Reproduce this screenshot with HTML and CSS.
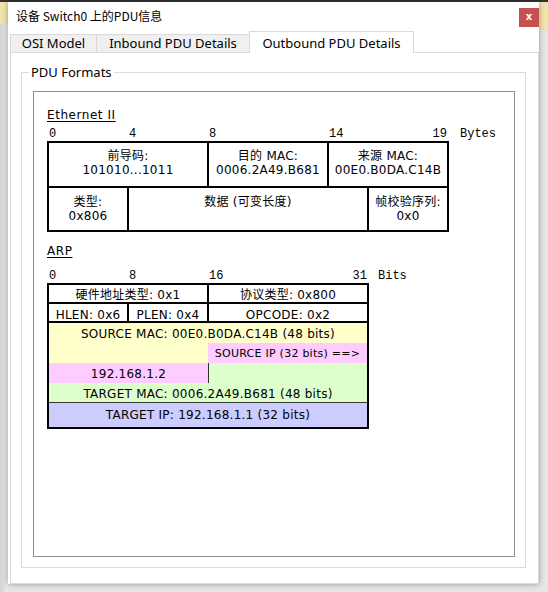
FILE: index.html
```html
<!DOCTYPE html>
<html>
<head>
<meta charset="utf-8">
<link rel="stylesheet" href="styles.css">
</head>
<body>
<div class="dialog">
  <div class="titlebar">
    <span class="title">设备 Switch0 上的PDU信息</span>
    <span class="close">x</span>
  </div>
  <div class="tabs">
    <div class="tab t-osi">OSI Model</div>
    <div class="tab t-in">Inbound PDU Details</div>
    <div class="tab t-out active">Outbound PDU Details</div>
  </div>
  <div class="pane">
    <fieldset class="group">
      <legend>PDU Formats</legend>
      <div class="panel">
        <div class="proto">Ethernet II</div>
        <div class="scale-row">
          <div class="scale eth-cols">
            <span class="s-0">0</span>
            <span class="s-4">4</span>
            <span class="s-8">8</span>
            <span class="s-14">14</span>
            <span class="s-19">19</span>
          </div>
          <span class="unit">Bytes</span>
        </div>
        <div class="eth eth-cols">
          <div class="cell e-pre">前导码:<br>101010...1011</div>
          <div class="cell e-dst">目的 MAC:<br>0006.2A49.B681</div>
          <div class="cell e-src">来源 MAC:<br>00E0.B0DA.C14B</div>
          <div class="cell e-type">类型:<br>0x806</div>
          <div class="cell e-data">数据 (可变长度)</div>
          <div class="cell e-fcs">帧校验序列:<br>0x0</div>
        </div>

        <div class="proto arp-title">ARP</div>
        <div class="scale-row">
          <div class="scale arp-cols">
            <span class="b-0">0</span>
            <span class="b-8">8</span>
            <span class="b-16">16</span>
            <span class="b-31">31</span>
          </div>
          <span class="unit unit-bits">Bits</span>
        </div>
        <div class="arp arp-cols">
          <div class="acell a-hw">硬件地址类型: 0x1</div>
          <div class="acell a-pt">协议类型: 0x800</div>
          <div class="acell a-hlen">HLEN: 0x6</div>
          <div class="acell a-plen">PLEN: 0x4</div>
          <div class="acell a-op">OPCODE: 0x2</div>
          <div class="addr">
            <div class="f yellow full">SOURCE MAC: 00E0.B0DA.C14B (48 bits)</div>
            <div class="f yellow"></div>
            <div class="f pink small">SOURCE IP (32 bits) ==&gt;</div>
            <div class="f pink">192.168.1.2</div>
            <div class="f green split"></div>
            <div class="f green full">TARGET MAC: 0006.2A49.B681 (48 bits)</div>
            <div class="f blue full tip">TARGET IP: 192.168.1.1 (32 bits)</div>
          </div>
        </div>
      </div>
    </fieldset>
  </div>
</div>
</body>
</html>
```
FILE: styles.css
```css
html, body {
  height: 100%;
}
body {
  margin: 0;
  padding: 2px 0 0 8px;
  box-sizing: border-box;
  background:
    linear-gradient(#333, #333) 0 0 / 100% 2px no-repeat,
    linear-gradient(#f1e5ab, #f1e5ab) 0 2px / 8px 22px no-repeat,
    linear-gradient(#f1e5ab, #f1e5ab) 540px 2px / 8px 28px no-repeat,
    linear-gradient(90deg, #d4d4d4, #ececec 8px) 0 0 / 8px 100% no-repeat,
    #e6e6e6;
  font-family: "Noto Sans", "Noto Sans CJK SC", sans-serif;
  color: #000;
}

.dialog {
  width: 531px;
  height: 582px;
  background: #fff;
  display: flex;
  flex-direction: column;
  box-shadow: 0 0 6px rgba(0, 0, 0, 0.35);
}

.titlebar {
  height: 29px;
  flex: none;
  display: flex;
  align-items: flex-start;
  padding-left: 8px;
}
.title {
  font-family: "Noto Sans CJK SC", "Noto Sans", sans-serif;
  font-size: 12px;
  line-height: 16px;
  margin-top: 6px;
}
.close {
  margin-left: auto;
  margin-top: 6px;
  width: 20px;
  height: 19px;
  background: #c75050;
  color: #fff;
  font-family: "DejaVu Sans", sans-serif;
  font-weight: bold;
  font-size: 10px;
  line-height: 18px;
  text-align: center;
}

.tabs {
  height: 21px;
  flex: none;
  display: flex;
  align-items: flex-start;
  padding-left: 2px;
  position: relative;
  z-index: 1;
}
.tab {
  box-sizing: border-box;
  height: 18px;
  margin-top: 3px;
  border: 1px solid #d9d9d9;
  border-bottom: none;
  background: #f0f0f0;
  font-size: 13px;
  line-height: 17px;
  text-align: center;
  white-space: nowrap;
}
.t-osi { width: 87px; }
.t-in { width: 154px; margin-left: -1px; }
.t-out { width: 165px; margin-left: -1px; }
.tab.active {
  height: 22px;
  margin-top: 0;
  background: #fff;
  line-height: 22px;
}

.pane {
  flex: 1;
  margin-left: 2px;
  margin-right: 0;
  border: 1px solid #d9d9d9;
  display: flex;
  flex-direction: column;
  padding: 11px 12px 15px 10px;
  min-height: 0;
}

.group {
  flex: 1;
  margin: 0;
  padding: 0;
  border: 1px solid #dcdcdc;
  display: flex;
  flex-direction: column;
  min-width: 0;
  min-height: 0;
}
.group legend {
  margin-left: 7px;
  padding: 0 2px;
  font-size: 13px;
  line-height: 16px;
}

.panel {
  flex: 1;
  margin: 11px 10px 10px 11px;
  border: 1px solid #8a8e96;
  padding: 15px 0 0 13px;
  font-family: "DejaVu Sans", "Noto Sans CJK SC", sans-serif;
  font-size: 12px;
  letter-spacing: 0.25px;
}

.proto {
  font-size: 12px;
  line-height: 16px;
  letter-spacing: 0.55px;
  text-decoration: underline;
  text-underline-offset: 2px;
}
.arp-title {
  margin-top: 11px;
}

.scale-row {
  display: flex;
  align-items: flex-start;
  margin-top: 4px;
  font-family: "Liberation Mono", monospace;
  font-size: 12px;
  letter-spacing: 0;
  line-height: 14px;
  height: 14px;
}
.arp-title + .scale-row {
  margin-top: 10px;
}
.scale {
  display: grid;
  padding: 0 2px;
  column-gap: 2px;
}
.unit { margin-left: 11px; }
.unit-bits { margin-left: 9px; }

.eth-cols {
  box-sizing: border-box;
  width: 402px;
  grid-template-columns: repeat(20, minmax(0, 1fr));
}
.arp-cols {
  box-sizing: border-box;
  width: 322px;
  grid-template-columns: repeat(32, minmax(0, 1fr));
}

.s-0 { grid-column: 1 / 3; }
.s-4 { grid-column: 5 / 7; }
.s-8 { grid-column: 9 / 11; }
.s-14 { grid-column: 15 / 18; }
.s-19 { grid-column: 18 / 21; text-align: right; }
.b-0 { grid-column: 1 / 4; }
.b-8 { grid-column: 9 / 12; }
.b-16 { grid-column: 17 / 20; }
.b-31 { grid-column: 29 / 33; text-align: right; }

.eth {
  display: grid;
  grid-template-rows: 43px 42px;
  gap: 2px;
  padding: 2px;
  background: #000;
}
.cell {
  background: #fff;
  text-align: center;
  line-height: 14px;
  padding-top: 6px;
  white-space: nowrap;
  overflow: hidden;
}
.e-pre { grid-column: 1 / 9; }
.e-dst { grid-column: 9 / 15; }
.e-src { grid-column: 15 / 21; }
.e-type { grid-column: 1 / 5; padding-top: 7px; }
.e-data { grid-column: 5 / 17; padding-top: 7px; }
.e-fcs { grid-column: 17 / 21; padding-top: 7px; }

.arp {
  display: grid;
  grid-template-rows: 17px 17px 104px;
  gap: 2px;
  padding: 2px;
  background: #000;
}
.acell {
  background: #fff;
  text-align: center;
  line-height: 16px;
  padding-top: 2px;
  white-space: nowrap;
  overflow: hidden;
}
.a-hw { grid-column: 1 / 17; }
.a-pt { grid-column: 17 / 33; }
.a-hlen { grid-column: 1 / 9; padding-top: 3px; }
.a-plen { grid-column: 9 / 17; padding-top: 3px; }
.a-op { grid-column: 17 / 33; padding-top: 3px; }

.addr {
  grid-column: 1 / 33;
  display: grid;
  grid-template-columns: 1fr 1fr;
  grid-template-rows: 20px 20px 20px 19px 25px;
}
.f {
  text-align: center;
  line-height: 16px;
  padding-top: 3px;
  white-space: nowrap;
  overflow: hidden;
}
.full { grid-column: 1 / 3; }
.small { font-size: 11px; }
.yellow { background: #ffffcc; }
.pink { background: #ffccff; }
.green { background: #ddffcc; }
.blue { background: #ccccff; }
.split { border-left: 1px solid #333; }
.tip {
  border-top: 1px solid #333;
  padding-top: 4px;
}
```
